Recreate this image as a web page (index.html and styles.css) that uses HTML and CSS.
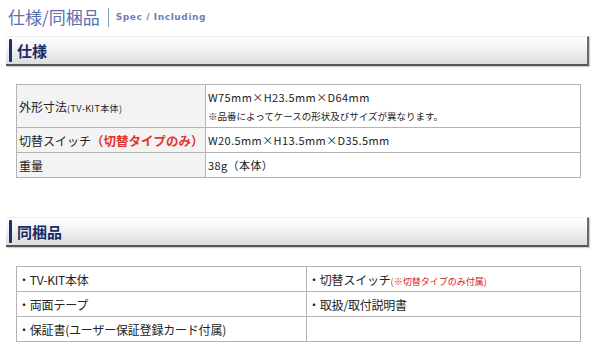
FILE: index.html
```html
<!DOCTYPE html>
<html lang="ja">
<head>
<meta charset="utf-8">
<link rel="stylesheet" href="styles.css">
</head>
<body>
<div class="page">
  <div class="title">
    <span class="title-ja">仕様/同梱品</span>
    <span class="title-sep"></span>
    <span class="title-en">Spec / Including</span>
  </div>

  <div class="bar"><span class="bar-mark"></span><span class="bar-text">仕様</span></div>

  <table class="spec">
    <tr class="r1">
      <th>外形寸法<small>(TV-KIT本体)</small></th>
      <td>W75mm×H23.5mm×D64mm<br><span class="note">※品番によってケースの形状及びサイズが異なります。</span></td>
    </tr>
    <tr>
      <th>切替スイッチ<b class="red">（切替タイプのみ）</b></th>
      <td>W20.5mm×H13.5mm×D35.5mm</td>
    </tr>
    <tr>
      <th>重量</th>
      <td>38g（本体）</td>
    </tr>
  </table>

  <div class="bar bar2"><span class="bar-mark"></span><span class="bar-text">同梱品</span></div>

  <table class="incl">
    <tr>
      <td>・TV-KIT本体</td>
      <td>・切替スイッチ<span class="red-s">(※切替タイプのみ付属)</span></td>
    </tr>
    <tr>
      <td>・両面テープ</td>
      <td>・取扱/取付説明書</td>
    </tr>
    <tr>
      <td>・保証書(ユーザー保証登録カード付属)</td>
      <td></td>
    </tr>
  </table>
</div>
</body>
</html>
```

FILE: styles.css
```css
html, body {
  margin: 0;
  padding: 0;
  background: #ffffff;
}
body {
  font-family: "Noto Sans CJK JP", "Noto Sans", sans-serif;
  color: #222;
}
.page {
  width: 595px;
  height: 360px;
  overflow: hidden;
}
.title {
  display: flex;
  align-items: center;
  height: 22px;
  padding: 6px 0 0 8px;
}
.title-ja {
  font-size: 17px;
  color: #5a6fb0;
  line-height: 22px;
}
.title-sep {
  width: 1px;
  height: 19px;
  background: #8a98c4;
  margin: 0 7px 0 8px;
}
.title-en {
  font-family: "DejaVu Sans", sans-serif;
  font-size: 9px;
  font-weight: bold;
  color: #6e80b8;
  letter-spacing: 0.6px;
}
.bar {
  display: flex;
  align-items: center;
  margin: 8px 6px 0 6px;
  height: 27px;
  background: linear-gradient(#ffffff 0%, #f4f4f4 40%, #dcdcdc 100%);
  border-top: 1px solid #eeeeee;
  border-right: 2px solid #6a6a6a;
  border-bottom: 2px solid #555555;
  box-shadow: 1px 1px 1px #cfcfcf;
}
.bar2 {
  margin-top: 39px;
}
.bar-mark {
  width: 3px;
  height: 23px;
  background: #1b2f73;
  margin-left: 3px;
  border-radius: 1px;
}
.bar-text {
  font-size: 15px;
  font-weight: bold;
  color: #1a2c66;
  margin-left: 5px;
  line-height: 20px;
}
table {
  border-collapse: collapse;
  margin-left: 16px;
  width: 565px;
  table-layout: fixed;
}
.spec {
  margin-top: 18px;
}
.spec th, .spec td, .incl td {
  border: 1px solid #b4b4b4;
  font-weight: normal;
  text-align: left;
  font-size: 11px;
  padding: 0 0 0 2px;
  color: #222;
}
.spec th {
  width: 186px;
  background: #f3f3f3;
  font-size: 12px;
  height: 24px;
}
.spec td {
  height: 24px;
  font-size: 11px;
  letter-spacing: 0.4px;
}
.spec tr.r1 th, .spec tr.r1 td {
  height: 42px;
}
.spec tr.r1 td {
  line-height: 18px;
}
.spec th small {
  font-size: 9px;
  letter-spacing: 0.4px;
}
.note {
  font-size: 9.5px;
  letter-spacing: 0;
}
.red {
  color: #e2352e;
  font-size: 12.5px;
  font-weight: bold;
}
.incl {
  margin-top: 19px;
}
.incl td {
  height: 24px;
  font-size: 12px;
  padding-left: 1px;
  letter-spacing: -0.2px;
}
.incl td:first-child {
  width: 288px;
}
.red-s {
  color: #d82020;
  font-size: 9px;
  letter-spacing: 0;
}
```
